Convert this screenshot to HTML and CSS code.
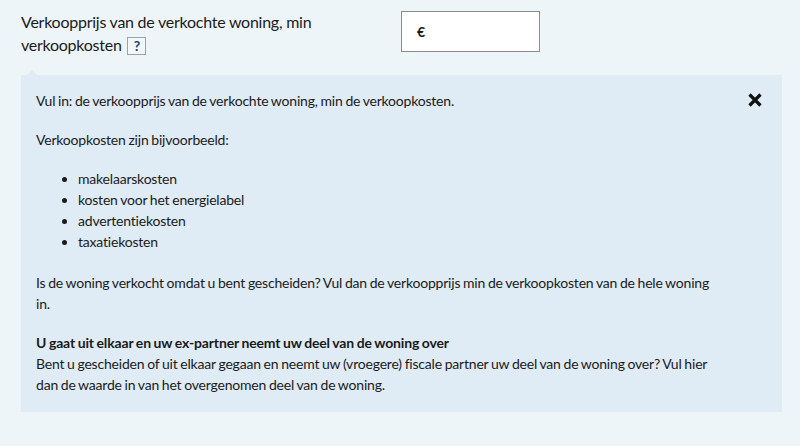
FILE: index.html
```html
<!DOCTYPE html>
<html lang="nl">
<head>
<meta charset="utf-8">
<link rel="stylesheet" href="styles.css">
</head>
<body>
<div class="field">
  <div class="row">
    <label class="label">Verkoopprijs van de verkochte woning, min verkoopkosten <button class="help-btn" type="button">?</button></label>
    <div class="input"><span class="euro">€</span></div>
  </div>
  <div class="help">
    <button class="close" type="button" aria-label="Sluiten">
      <svg width="16" height="16" viewBox="0 0 16 16"><path d="M2.5 2.5 L13.5 13.5 M13.5 2.5 L2.5 13.5" stroke="#111" stroke-width="3.2" stroke-linecap="butt"/></svg>
    </button>
    <p>Vul in: de verkoopprijs van de verkochte woning, min de verkoopkosten.</p>
    <p>Verkoopkosten zijn bijvoorbeeld:</p>
    <ul>
      <li>makelaarskosten</li>
      <li>kosten voor het energielabel</li>
      <li>advertentiekosten</li>
      <li>taxatiekosten</li>
    </ul>
    <p>Is de woning verkocht omdat u bent gescheiden? Vul dan de verkoopprijs min de verkoopkosten van de hele woning in.</p>
    <p class="last"><strong>U gaat uit elkaar en uw ex-partner neemt uw deel van de woning over</strong><br>Bent u gescheiden of uit elkaar gegaan en neemt uw (vroegere) fiscale partner uw deel van de woning over? Vul hier dan de waarde in van het overgenomen deel van de woning.</p>
  </div>
</div>
</body>
</html>
```

FILE: styles.css
```css
html, body {
  margin: 0;
  padding: 0;
  background: #edf5f9;
  color: #1b1b1b;
  font-family: Lato, "Open Sans", sans-serif;
}

.field {
  padding: 10px 18px 0 21px;
}

.row {
  display: flex;
  align-items: flex-start;
}

.label {
  width: 380px;
  font-size: 16px;
  line-height: 23px;
  letter-spacing: -0.25px;
}

.help-btn {
  display: inline-block;
  width: 19px;
  height: 18px;
  padding: 0;
  margin-left: 2px;
  border: 1px solid #9aa3a8;
  background: #f2f7fa;
  color: #154273;
  font-family: inherit;
  font-weight: bold;
  font-size: 14px;
  line-height: 16px;
  text-align: center;
  vertical-align: 0;
}

.input {
  margin-top: 1px;
  width: 122px;
  height: 39px;
  background: #fff;
  border: 1px solid #8c8c8c;
  display: flex;
  align-items: center;
  padding-left: 15px;
  box-sizing: content-box;
}

.euro {
  font-weight: bold;
  font-size: 14px;
}

.help {
  position: relative;
  margin-top: 19px;
  background: #dfebf5;
  padding: 15px 66px 17px 15px;
  font-size: 14px;
  line-height: 21px;
  letter-spacing: -0.2px;
  word-spacing: -0.6px;
}

.help::before {
  content: "";
  position: absolute;
  left: 6px;
  top: -5px;
  border-left: 5px solid transparent;
  border-right: 5px solid transparent;
  border-bottom: 5px solid #dfebf5;
}

.help p {
  margin: 0 0 18px;
}

.help p.last {
  margin: 0;
}

.help strong {
  letter-spacing: -0.15px;
}

.help ul {
  margin: 0 0 20px;
  padding-left: 42px;
}

.close {
  position: absolute;
  right: 19px;
  top: 17px;
  width: 16px;
  height: 16px;
  padding: 0;
  border: 0;
  background: none;
}

.close svg {
  display: block;
}
```
